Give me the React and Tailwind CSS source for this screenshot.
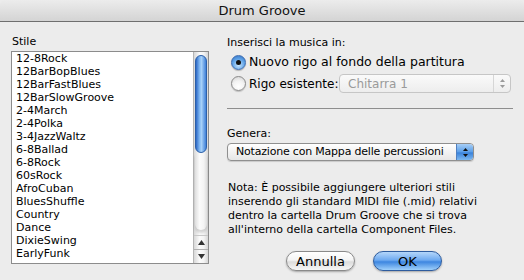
import React from 'react';

const STYLES = [
  '12-8Rock',
  '12BarBopBlues',
  '12BarFastBlues',
  '12BarSlowGroove',
  '2-4March',
  '2-4Polka',
  '3-4JazzWaltz',
  '6-8Ballad',
  '6-8Rock',
  '60sRock',
  'AfroCuban',
  'BluesShuffle',
  'Country',
  'Dance',
  'DixieSwing',
  'EarlyFunk',
];

function Radio({ checked }) {
  return checked ? (
    <span className="shrink-0 w-[15px] h-[15px] rounded-full border border-[#3d6cb0] bg-[radial-gradient(circle_at_50%_70%,#c9e6ff_0%,#5ea2e6_55%,#2f6fc4_100%)] flex items-center justify-center shadow-[0_1px_1px_rgba(0,0,0,0.25)]">
      <span className="w-[5px] h-[5px] rounded-full bg-[#111]" />
    </span>
  ) : (
    <span className="shrink-0 w-[15px] h-[15px] rounded-full border border-[#8a8a8a] bg-[radial-gradient(circle_at_50%_75%,#ffffff_0%,#f2f2f2_50%,#cfcfcf_100%)] shadow-[0_1px_1px_rgba(0,0,0,0.2)]" />
  );
}

function Arrows({ color }) {
  return (
    <svg width="7" height="11" viewBox="0 0 7 11">
      <path d="M3.5 1 L6 4 L1 4 Z" fill={color} />
      <path d="M3.5 10 L6 7 L1 7 Z" fill={color} />
    </svg>
  );
}

export default function App() {
  return (
    <div className="w-[524px] h-[280px] bg-[#ececec] overflow-hidden flex flex-col text-black" style={{ fontFamily: '"Lucida Grande", "DejaVu Sans", sans-serif' }}>
      {/* Title bar */}
      <div className="h-[22px] shrink-0 rounded-t-[5px] bg-[linear-gradient(#ececec,#d4d4d4)] border-b border-[#6f6f6f] flex items-center justify-center">
        <span className="text-[13px] leading-none text-[#111]">Drum Groove</span>
      </div>

      <div className="flex flex-1">
        {/* Left: style list */}
        <div className="pl-[11px] pt-[13px] w-[216px] shrink-0">
          <div className="text-[11px] leading-[13px] mb-[3px] pl-[1px]">Stile</div>
          <div className="w-[198px] h-[213px] border border-[#8c8c8c] bg-white flex">
            <div className="flex-1 overflow-hidden pl-[4px] text-[11px] leading-[13px]">
              {STYLES.map(s => (
                <div key={s} className="whitespace-nowrap">{s}</div>
              ))}
            </div>
            {/* Scrollbar */}
            <div className="w-[15px] border-l border-[#b5b5b5] flex flex-col bg-[linear-gradient(90deg,#d8d8d8,#fbfbfb_40%,#f4f4f4_70%,#d6d6d6)]">
              <div className="flex-1 pt-[3px] px-[1px]">
                <div className="h-[98px] rounded-[7px] border border-[#2b5fa8] bg-[linear-gradient(90deg,#2c67c4,#7eb6f2_35%,#a6d0f8_55%,#3f80d8)]" />
                <div className="h-[77px] rounded-b-[7px] shadow-[0_3px_3px_rgba(0,0,0,0.15)]" />
              </div>
              <div className="h-[14px] border-t border-[#c8c8c8] flex items-center justify-center">
                <svg width="7" height="5" viewBox="0 0 7 5"><path d="M3.5 0 L7 5 L0 5 Z" fill="#333" /></svg>
              </div>
              <div className="h-[14px] border-t border-[#b0b0b0] flex items-center justify-center">
                <svg width="7" height="5" viewBox="0 0 7 5"><path d="M0 0 L7 0 L3.5 5 Z" fill="#333" /></svg>
              </div>
            </div>
          </div>
        </div>

        {/* Right: options */}
        <div className="flex-1 pl-[11px] pr-[11px] pt-[14px] flex flex-col">
          <div className="text-[11px] leading-[13px]">Inserisci la musica in:</div>
          <div className="mt-[5px] pl-[4px] flex items-center gap-[3px] h-[17px] text-[12.5px] whitespace-nowrap">
            <Radio checked />
            <span>Nuovo rigo al fondo della partitura</span>
          </div>
          <div className="mt-[3px] pl-[4px] flex items-center h-[19px] text-[12px] whitespace-nowrap">
            <Radio />
            <span className="ml-[3px] w-[90px] shrink-0">Rigo esistente:</span>
            <div className="w-[172px] shrink-0 h-[19px] rounded-[4px] border border-[#c6c6c6] bg-[linear-gradient(#fafafa,#ededed)] flex items-center">
              <span className="flex-1 pl-[8px] text-[#9a9a9a]">Chitarra 1</span>
              <span className="w-[17px] h-full border-l border-[#d6d6d6] flex items-center justify-center">
                <Arrows color="#9a9a9a" />
              </span>
            </div>
          </div>
          <div className="mt-[15px] h-px bg-[#8e8e8e]" />
          <div className="mt-[18px] text-[11px] leading-[13px]">Genera:</div>
          <div className="mt-[3px] w-[247px] h-[18px] rounded-[4px] border border-[#8f8f8f] bg-[linear-gradient(#ffffff,#f2f2f2_50%,#e6e6e6)] flex items-center shadow-[0_1px_1px_rgba(0,0,0,0.15)] overflow-hidden">
            <span className="flex-1 pl-[8px] text-[11px] tracking-[-0.2px] whitespace-nowrap overflow-hidden">Notazione con Mappa delle percussioni</span>
            <span className="shrink-0 w-[17px] h-full rounded-r-[3px] bg-[linear-gradient(#a7cef6,#5a9ee8_50%,#3a82da_55%,#7cb8f0)] border-l border-[#4f7fc0] flex items-center justify-center">
              <Arrows color="#111" />
            </span>
          </div>
          <div className="mt-[20px] text-[11px] leading-[14px] pl-[1px]">
            <div>Nota: È possibile aggiungere ulteriori stili</div>
            <div>inserendo gli standard MIDI file (.mid) relativi</div>
            <div>dentro la cartella Drum Groove che si trova</div>
            <div>all'interno della cartella Component Files.</div>
          </div>
          <div className="mt-[14px] flex gap-[18px] pl-[59px]">
            <button className="w-[69px] h-[20px] rounded-full border border-[#8a8a8a] bg-[linear-gradient(#ffffff,#f4f4f4_45%,#dcdcdc_55%,#f7f7f7)] text-[13px] leading-none shadow-[0_1px_2px_rgba(0,0,0,0.3)]">
              Annulla
            </button>
            <button className="w-[69px] h-[20px] rounded-full border border-[#2e5c9e] bg-[linear-gradient(#b4d6fa,#6eaaf0_45%,#3d86e0_55%,#9fd0fb)] text-[13px] leading-none shadow-[0_1px_2px_rgba(0,0,0,0.3)]">
              OK
            </button>
          </div>
        </div>
      </div>
    </div>
  );
}
